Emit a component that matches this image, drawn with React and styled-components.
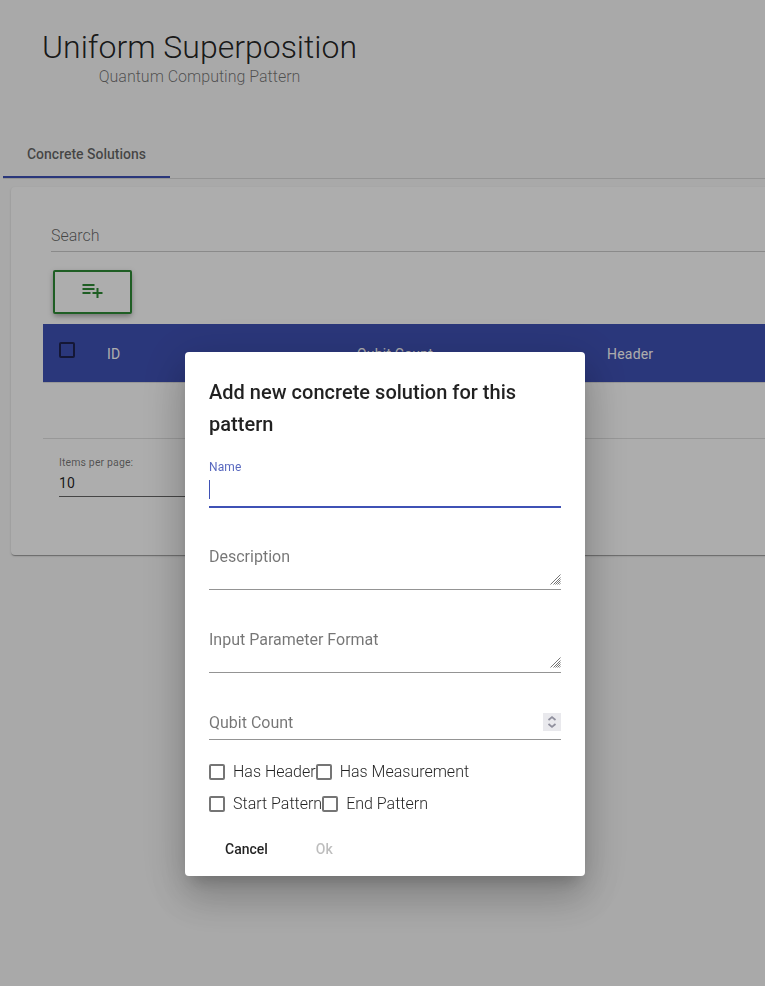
import React from 'react';
import styled, { createGlobalStyle, css } from 'styled-components';

const GlobalStyle = createGlobalStyle`
  *, *::before, *::after { box-sizing: border-box; }
  html, body { margin: 0; height: 100%; overflow: hidden; }
  body {
    background: #fafafa;
    color: rgba(0, 0, 0, 0.87);
    font-family: Roboto, 'Liberation Sans', sans-serif;
    font-size: 16px;
    font-weight: 300;
  }
  h1, h2, p { margin: 0; }
`;

const Page = styled.main`
  height: 986px;
  overflow: hidden;
  padding-left: 3px;
`;

const PageHeader = styled.header`
  width: fit-content;
  height: 130px;
  padding: 28px 0 0 39px;
  text-align: center;
`;

const PageTitle = styled.h1`
  font-size: 32px;
  font-weight: 300;
  line-height: 38px;
`;

const Subtitle = styled.p`
  line-height: 22px;
  color: rgba(0, 0, 0, 0.54);
`;

const TabBar = styled.nav`
  display: flex;
  height: 49px;
  border-bottom: 1px solid rgba(0, 0, 0, 0.12);
`;

const Tab = styled.div`
  width: 167px;
  height: 48px;
  border-bottom: 2px solid #3f51b5;
  font-size: 14px;
  font-weight: 500;
  line-height: 48px;
  text-align: center;
  color: rgba(0, 0, 0, 0.6);
`;

const Card = styled.section`
  width: 1100px;
  height: 368px;
  margin: 8px 0 0 8px;
  padding: 32px;
  border-radius: 4px;
  background: #fff;
  box-shadow: 0 2px 1px -1px rgba(0, 0, 0, 0.2), 0 1px 1px rgba(0, 0, 0, 0.14), 0 1px 3px rgba(0, 0, 0, 0.12);
`;

const SearchField = styled.div`
  height: 33px;
  margin-left: 8px;
  padding-top: 7px;
  border-bottom: 1px solid rgba(0, 0, 0, 0.2);
  line-height: 20px;
  color: rgba(0, 0, 0, 0.6);
`;

const AddButton = styled.button`
  display: flex;
  justify-content: center;
  width: 79px;
  height: 44px;
  margin: 18px 0 10px 10px;
  padding: 6px 1px 0 0;
  border: 2px solid #2e8b35;
  border-radius: 2px;
  background: #fff;
  color: #2e8b35;
  box-shadow: 0 3px 5px -1px rgba(0, 0, 0, 0.2), 0 2px 6px rgba(0, 0, 0, 0.18);
`;

const TableHeader = styled.div`
  display: grid;
  grid-template-columns: 48px 250px 250px 1fr;
  align-items: center;
  height: 58px;
  padding: 2px 0 0 16px;
  background: #3f51b5;
  color: #fff;
  font-size: 14px;
  font-weight: 400;
  letter-spacing: 0.2px;
`;

const EmptyRow = styled.div`
  height: 57px;
  border-top: 1px solid rgba(0, 0, 0, 0.12);
  border-bottom: 1px solid rgba(0, 0, 0, 0.12);
`;

const Paginator = styled.div`
  width: 160px;
  margin: 16px 0 0 16px;
  border-bottom: 1px solid rgba(0, 0, 0, 0.6);
  font-weight: 400;
`;

const PaginatorLabel = styled.div`
  font-size: 10.5px;
  line-height: 16px;
  letter-spacing: 0.13px;
  color: rgba(0, 0, 0, 0.54);
`;

const PaginatorValue = styled.div`
  height: 25px;
  font-size: 14px;
  line-height: 25px;
  letter-spacing: 0.2px;
`;

const Backdrop = styled.div`
  position: fixed;
  inset: 0;
  display: flex;
  align-items: flex-start;
  justify-content: center;
  padding: 352px 0 0 5px;
  background: rgba(0, 0, 0, 0.32);
`;

const Dialog = styled.div`
  width: 400px;
  height: 524px;
  padding: 24px;
  border-radius: 4px;
  background: #fff;
  box-shadow: 0 11px 15px -7px rgba(0, 0, 0, 0.2), 0 24px 38px 3px rgba(0, 0, 0, 0.14), 0 9px 46px 8px rgba(0, 0, 0, 0.12);
`;

const DialogTitle = styled.h2`
  font-size: 20px;
  font-weight: 500;
  line-height: 32px;
  letter-spacing: 0.02px;
`;

const Field = styled.div`
  display: flex;
  justify-content: space-between;
  height: ${(p) => p.$height}px;
  margin-top: ${(p) => p.$gap}px;
  border-bottom: 1px solid rgba(0, 0, 0, 0.42);
  font-weight: 400;
  line-height: 20px;
  color: rgba(0, 0, 0, 0.54);
  ${(p) => p.$focused && css`
    flex-direction: column;
    border-bottom: 2px solid #3f51b5;
    color: rgba(63, 81, 181, 0.87);
    font-size: 12px;
    line-height: 14px;
    letter-spacing: 0.1px;
  `}
`;

const Caret = styled.span`
  width: 1px;
  height: 19px;
  margin-bottom: 7px;
  background: #3f51b5;
`;

const ResizeHandle = styled.svg`
  align-self: flex-end;
  margin-bottom: 4px;
`;

const Stepper = styled.svg`
  background: #e9e9ed;
`;

const CheckboxRow = styled.div`
  display: flex;
  height: 32px;
  line-height: 24px;
`;

const CheckboxLabel = styled.label`
  display: flex;
  gap: 8px;
`;

const CheckboxBox = styled.span`
  width: 16px;
  height: 16px;
  margin-top: ${(p) => p.$top ?? 4}px;
  border: 2px solid ${(p) => p.$color || 'rgba(0, 0, 0, 0.54)'};
  border-radius: 2px;
`;

const Options = styled.div`
  margin-top: 20px;
`;

const Actions = styled.div`
  display: flex;
  margin-top: 7px;
`;

const TextButton = styled.button`
  height: 36px;
  padding: 0 16px;
  margin-right: 16px;
  border: 0;
  background: none;
  font: 500 14px/36px Roboto, sans-serif;
  color: rgba(0, 0, 0, 0.87);
  &:disabled { color: rgba(0, 0, 0, 0.26); }
`;

const PlaylistAddIcon = () => (
  <svg width="24" height="24" viewBox="-0.5 0 24 24" fill="currentColor">
    <path d="M14 10H2v2h12v-2zm0-4H2v2h12V6zm4 8v-4h-2v4h-4v2h4v4h2v-4h4v-2h-4zM2 16h8v-2H2v2z" />
  </svg>
);

const Resizer = () => (
  <ResizeHandle width="11" height="11" viewBox="0 0 11 11" fill="none" stroke="#666" strokeWidth="0.9">
    <path d="M.5 10.5l10-10M3.5 10.5l7-7M5.5 10.5l5-5M7.5 10.5l3-3M9.5 10.5l1-1" />
  </ResizeHandle>
);

const Checkbox = ({ children }) => (
  <CheckboxLabel>
    <CheckboxBox />
    {children}
  </CheckboxLabel>
);

export default function App() {
  return (
    <>
      <GlobalStyle />
      <Page>
        <PageHeader>
          <PageTitle>Uniform Superposition</PageTitle>
          <Subtitle>Quantum Computing Pattern</Subtitle>
        </PageHeader>
        <TabBar>
          <Tab>Concrete Solutions</Tab>
        </TabBar>
        <Card>
          <SearchField>Search</SearchField>
          <AddButton aria-label="Add solution">
            <PlaylistAddIcon />
          </AddButton>
          <TableHeader>
            <CheckboxBox $top={-8} $color="#1e2250" />
            <span>ID</span>
            <span>Qubit Count</span>
            <span>Header</span>
          </TableHeader>
          <EmptyRow />
          <Paginator>
            <PaginatorLabel>Items per page:</PaginatorLabel>
            <PaginatorValue>10</PaginatorValue>
          </Paginator>
        </Card>
      </Page>
      <Backdrop>
        <Dialog role="dialog">
          <DialogTitle>Add new concrete solution for this pattern</DialogTitle>
          <Field $focused $gap={20} $height={48}>
            Name
            <Caret />
          </Field>
          <Field $gap={39} $height={43}>
            Description
            <Resizer />
          </Field>
          <Field $gap={40} $height={43}>
            Input Parameter Format
            <Resizer />
          </Field>
          <Field $gap={40} $height={27}>
            Qubit Count
            <Stepper width="18" height="18" viewBox="0 0 18 18" fill="none" stroke="#8f8f9d" strokeWidth="1.7">
              <path d="M5.5 7L9 4l3.5 3M5.5 11L9 14l3.5-3" />
            </Stepper>
          </Field>
          <Options>
            <CheckboxRow>
              <Checkbox>Has Header</Checkbox>
              <Checkbox>Has Measurement</Checkbox>
            </CheckboxRow>
            <CheckboxRow>
              <Checkbox>Start Pattern</Checkbox>
              <Checkbox>End Pattern</Checkbox>
            </CheckboxRow>
          </Options>
          <Actions>
            <TextButton>Cancel</TextButton>
            <TextButton disabled>Ok</TextButton>
          </Actions>
        </Dialog>
      </Backdrop>
    </>
  );
}
